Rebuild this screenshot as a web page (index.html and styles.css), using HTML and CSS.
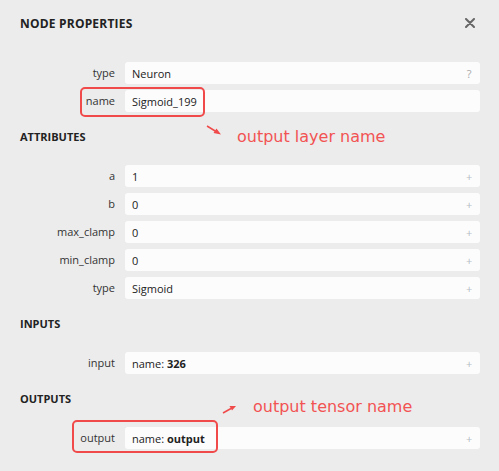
FILE: index.html
```html
<!DOCTYPE html>
<html>
<head>
<meta charset="utf-8">
<link rel="stylesheet" href="styles.css">
</head>
<body>
<div class="sidebar">
  <div class="title-bar">
    <div class="title">NODE PROPERTIES</div>
    <svg class="close" width="10" height="10" viewBox="0 0 10 10"><path d="M1 1 L9 9 M9 1 L1 9" stroke="#666" stroke-width="2" stroke-linecap="round"/></svg>
  </div>

  <div class="props first">
    <div class="label">type</div>
    <div class="value"><span>Neuron</span><span class="icon q">?</span></div>
    <div class="label">name</div>
    <div class="value"><span>Sigmoid_199</span></div>
  </div>

  <div class="section">ATTRIBUTES</div>
  <div class="props">
    <div class="label">a</div>
    <div class="value"><span>1</span><span class="icon">+</span></div>
    <div class="label">b</div>
    <div class="value"><span>0</span><span class="icon">+</span></div>
    <div class="label">max_clamp</div>
    <div class="value"><span>0</span><span class="icon">+</span></div>
    <div class="label">min_clamp</div>
    <div class="value"><span>0</span><span class="icon">+</span></div>
    <div class="label">type</div>
    <div class="value"><span>Sigmoid</span><span class="icon">+</span></div>
  </div>

  <div class="section">INPUTS</div>
  <div class="props">
    <div class="label">input</div>
    <div class="value"><span>name: <b>326</b></span><span class="icon">+</span></div>
  </div>

  <div class="section">OUTPUTS</div>
  <div class="props">
    <div class="label">output</div>
    <div class="value"><span>name: <b>output</b></span><span class="icon">+</span></div>
  </div>
</div>

<div class="mark mark-name"></div>
<div class="mark mark-output"></div>
<div class="note note-layer">output layer name</div>
<div class="note note-tensor">output tensor name</div>
<svg class="arrows" width="499" height="471" viewBox="0 0 499 471">
  <line x1="207" y1="126" x2="216" y2="131.5" stroke="#f04a4a" stroke-width="1.5"/>
  <polygon points="221,134.5 213.5,133 216.5,128.5" fill="#f04a4a"/>
  <line x1="223" y1="413" x2="231" y2="408.5" stroke="#f04a4a" stroke-width="1.5"/>
  <polygon points="236,406 229.5,406 232,410.5" fill="#f04a4a"/>
</svg>
</body>
</html>
```

FILE: styles.css
```css
html, body {
  margin: 0;
  padding: 0;
  background: #ececec;
}
body {
  width: 499px;
  height: 471px;
  overflow: hidden;
  position: relative;
  font-family: "Open Sans", "Noto Sans", sans-serif;
  color: #222;
}
.sidebar {
  padding: 0 19px 0 20px;
}
.title-bar {
  display: flex;
  justify-content: space-between;
  align-items: center;
  margin-top: 16px;
  height: 16px;
}
.title {
  font-size: 12px;
  font-weight: 700;
  line-height: 16px;
  color: #222;
  letter-spacing: 0.2px;
}
.close {
  margin-right: 5px;
  margin-top: -2px;
}
.props {
  display: grid;
  grid-template-columns: 95px 1fr;
  column-gap: 10px;
  row-gap: 6px;
}
.props.first {
  margin-top: 30px;
}
.label {
  text-align: right;
  font-size: 11px;
  line-height: 22px;
  color: #333;
}
.value {
  background: #fcfcfc;
  border-radius: 3px;
  height: 22px;
  display: flex;
  justify-content: space-between;
  align-items: center;
  padding: 0 8px 0 7px;
  font-size: 11px;
  color: #222;
}
.value b {
  font-weight: 700;
}
.icon {
  color: #b4bcc6;
  font-size: 11px;
  width: 6px;
  text-align: center;
}
.icon.q {
  color: #aaa;
}
.section {
  font-size: 11px;
  font-weight: 700;
  line-height: 16px;
  margin: 17px 0 20px;
  color: #222;
}
.mark {
  position: absolute;
  border: 2.5px solid #f04a4a;
  border-radius: 5px;
  box-sizing: border-box;
}
.mark-name {
  left: 80px;
  top: 87px;
  width: 125px;
  height: 30px;
}
.mark-output {
  left: 72px;
  top: 420px;
  width: 146px;
  height: 33px;
}
.note {
  position: absolute;
  font-family: "DejaVu Sans", sans-serif;
  font-size: 16px;
  line-height: 18px;
  color: #f25353;
  white-space: nowrap;
}
.note-layer {
  left: 237px;
  top: 128px;
}
.note-tensor {
  left: 253px;
  top: 398px;
}
.arrows {
  position: absolute;
  left: 0;
  top: 0;
  pointer-events: none;
}
```
